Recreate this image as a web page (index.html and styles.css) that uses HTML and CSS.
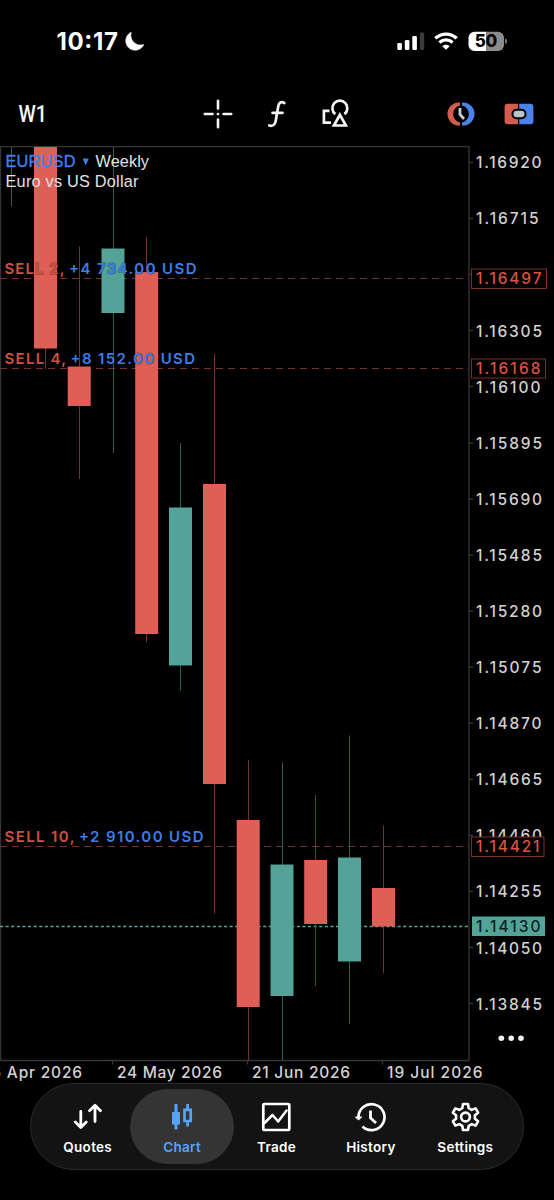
FILE: index.html
```html
<!DOCTYPE html>
<html lang="en">
<head>
<meta charset="utf-8">
<title>EURUSD Chart</title>
<link rel="stylesheet" href="styles.css">
</head>
<body>
<div class="app">
  <header class="status">
    <svg class="clock" viewBox="0 0 92 30">
      <text x="0.500" y="23.300" textLength="61.500">10:17</text>
      <path d="M75.200 5.300A9.400 9.400 0 1 0 87.800 17.500C80.500 20 73 13.500 75.200 5.300Z" fill="#fff" stroke="#fff" stroke-width=".6"/>
    </svg>
    <div class="indicators">
      <svg width="28" height="19" viewBox="0 0 28 19">
        <rect x="0.300" y="11" width="4.600" height="7" rx="1.300" fill="#fff"/>
        <rect x="7.800" y="8" width="4.600" height="10" rx="1.300" fill="#fff"/>
        <rect x="15.300" y="4" width="4.600" height="14" rx="1.300" fill="#fff"/>
        <rect x="22.900" y="0.500" width="4.300" height="17.500" rx="1.300" fill="#3b3b3b"/>
      </svg>
      <svg width="24" height="19" viewBox="0 0 24 19">
        <path d="M1.300 6.300C7.300.600 16.700.600 22.700 6.300" fill="none" stroke="#fff" stroke-width="3.300"/>
        <path d="M5.400 10.500C9.200 7.100 14.800 7.100 18.600 10.500" fill="none" stroke="#fff" stroke-width="3.200"/>
        <path d="M12 17.800L8.300 14.200C10.300 12.200 13.700 12.200 15.700 14.200Z" fill="#fff"/>
      </svg>
      <svg class="battery" width="39" height="21" viewBox="0 0 39 21">
        <path d="M6.500.700H18.300V20H6.500A6 6 0 0 1 .500 14V6.700A6 6 0 0 1 6.500.700Z" fill="#fff"/>
        <path d="M18.300.700H30A6 6 0 0 1 36 6.700V14A6 6 0 0 1 30 20H18.300Z" fill="#8b8b8b"/>
        <path d="M37.200 7.600Q39 8.400 39 10.300T37.200 13Z" fill="#8b8b8b"/>
        <text x="6.800" y="16.400" textLength="22.500">50</text>
      </svg>
    </div>
  </header>

  <nav class="toolbar">
    <svg class="timeframe" viewBox="0 0 32 30"><text x="0.500" y="22.500" textLength="28.500" lengthAdjust="spacingAndGlyphs">W1</text></svg>
    <div class="tools">
      <svg width="30" height="30" viewBox="0 0 30 30" stroke="#f4f4f4" stroke-width="2.600" stroke-linecap="round">
        <path d="M15 1.800V9.500M15 20.500V28.200M1.800 15H9.500M20.500 15H28.200M14.900 15H15.100"/>
      </svg>
      <svg width="20" height="28" viewBox="0 0 20 28" fill="none" stroke="#f4f4f4" stroke-width="2.700" stroke-linecap="round">
        <path d="M17.300 3C14.300 1.300 11.900 2.500 11.300 6L8.700 21C8.100 24.700 5.600 26.500 2.300 25.500M5.500 12.800H15.500"/>
      </svg>
      <svg width="30" height="30" viewBox="0 0 30 30" fill="none" stroke="#f4f4f4" stroke-width="2.700">
        <path d="M8.500 11.800H2.900V23.700H10"/>
        <path d="M14.300 15.100A7.500 7.500 0 1 1 23.400 15.100"/>
        <path d="M18.900 15.800L24.900 26.500H12.900Z"/>
      </svg>
    </div>
    <div class="trade-tools">
      <svg width="28" height="24" viewBox="0 0 28 24">
        <path d="M13 0.500H12A11.500 11.500 0 0 0 12 23.500H13V20.500A8.700 8.700 0 0 1 13 3.500Z" fill="#d25d4c"/>
        <path d="M15 .500H16A11.500 11.500 0 0 1 16 23.500H15V20.500A8.700 8.700 0 0 0 15 3.500Z" fill="#4b83ee"/>
        <path d="M13 6V12.500L17 17" fill="none" stroke="#c6cdd2" stroke-width="2.800"/>
      </svg>
      <svg width="30" height="22" viewBox="0 0 30 22">
        <path d="M3.500.800H14V21.200H3.500Q.600 21.200.600 18.300V3.700Q.600.800 3.500.800Z" fill="#d25d4c"/>
        <path d="M15.200.800H26.500Q29.400.800 29.400 3.700V18.300Q29.400 21.200 26.500 21.200H15.200Z" fill="#4b83ee"/>
        <rect x="8.500" y="6.800" width="13" height="8.400" rx="4" fill="#b9c3cb" stroke="#000" stroke-width="2"/>
      </svg>
    </div>
  </nav>

  <main>
    <svg class="chart" viewBox="0 146 554 937">
      <g class="frame">
        <path d="M0.500 1060V146.500H469V1060M0 1060.500H469.500"/>
        <path d="M469 162.500h4M469 218.500h4M469 274.500h4M469 330.500h4M469 386.500h4M469 443h4M469 499h4M469 555h4M469 611h4M469 667h4M469 723h4M469 779.500h4M469 835.500h4M469 891.500h4M469 947.500h4M469 1003.500h4M112.500 1060v4.500M247.500 1060v4.500M382.500 1060v4.500"/>
      </g>
      <g class="order-line">
        <path d="M0 278.500H469M0 368.500H469M0 846.500H469"/>
      </g>
      <path class="price-line" d="M0 926.500H469"/>
      <g class="wick down">
        <path d="M45.500 147V369M79.500 246.500V479M146.500 237.500V642M214.500 354V913.500M248.500 760V1060M315.500 795V986M383.500 825.500V973.500"/>
      </g>
      <g class="wick up">
        <path d="M11.500 147V206.500M113.500 147V453M180.500 443V690.500M282.500 762.500V1060M349.500 735.500V1024"/>
      </g>
      <g class="body down">
        <rect x="34" y="147" width="23" height="201.500"/>
        <rect x="67.700" y="366.500" width="23" height="39.500"/>
        <rect x="135.200" y="272" width="23" height="362"/>
        <rect x="203" y="484" width="23" height="300"/>
        <rect x="236.700" y="820" width="23" height="187"/>
        <rect x="304.200" y="860" width="23" height="64"/>
        <rect x="372" y="888" width="23" height="38.500"/>
      </g>
      <g class="body up">
        <rect x="101.500" y="248.500" width="23" height="64.500"/>
        <rect x="169" y="507.500" width="23" height="158"/>
        <rect x="270.500" y="864.500" width="23" height="131.500"/>
        <rect x="338" y="857.500" width="23" height="104"/>
      </g>

      <g class="symbol">
        <text class="ticker" x="5.500" y="166.500" textLength="70">EURUSD</text>
        <path d="M82.700 158.500H88.700L85.700 165.500Z" fill="#3f82ee"/>
        <text x="95.500" y="166.500" textLength="53.500">Weekly</text>
        <text x="5.500" y="187" textLength="133">Euro vs US Dollar</text>
      </g>
      <g class="order">
        <text class="sell" x="4.500" y="274" textLength="60">SELL 2,</text>
        <text class="profit" x="69" y="274" textLength="127.500">+4 734.00 USD</text>
        <text class="sell" x="4.500" y="364" textLength="61.500">SELL 4,</text>
        <text class="profit" x="70.500" y="364" textLength="124.500">+8 152.00 USD</text>
        <text class="sell" x="4.500" y="842" textLength="70">SELL 10,</text>
        <text class="profit" x="79" y="842" textLength="124.500">+2 910.00 USD</text>
      </g>

      <g class="axis">
        <text x="476" y="168" textLength="65.500">1.16920</text>
        <text x="476" y="224" textLength="62.500">1.16715</text>
        <text x="476" y="336.500" textLength="66">1.16305</text>
        <text x="476" y="392.500" textLength="64.500">1.16100</text>
        <text x="476" y="448.700" textLength="66">1.15895</text>
        <text x="476" y="504.700" textLength="66">1.15690</text>
        <text x="476" y="560.700" textLength="66">1.15485</text>
        <text x="476" y="616.700" textLength="66">1.15280</text>
        <text x="476" y="672.700" textLength="65.500">1.15075</text>
        <text x="476" y="729" textLength="65.500">1.14870</text>
        <text x="476" y="785" textLength="66">1.14665</text>
        <text x="476" y="841.300" textLength="66">1.14460</text>
        <text x="476" y="897.300" textLength="65.500">1.14255</text>
        <text x="476" y="953.500" textLength="66">1.14050</text>
        <text x="476" y="1009.500" textLength="66">1.13845</text>
        <text x="-19" y="1077.500" textLength="101">26 Apr 2026</text>
        <text x="117" y="1077.500" textLength="105">24 May 2026</text>
        <text x="252" y="1077.500" textLength="98">21 Jun 2026</text>
        <text x="387" y="1077.500" textLength="95.500">19 Jul 2026</text>
      </g>
      <g class="order-tag">
        <rect x="471.500" y="269" width="75" height="19.500"/>
        <text x="476" y="284" textLength="65.500">1.16497</text>
        <rect x="471.500" y="359" width="74" height="19"/>
        <text x="476" y="374" textLength="64.500">1.16168</text>
        <rect x="471.500" y="837" width="72.500" height="19.500"/>
        <text x="476" y="852.300" textLength="63.500">1.14421</text>
      </g>
      <g class="price-tag">
        <rect x="472" y="916.500" width="73" height="19.500"/>
        <text x="476" y="931.700" textLength="64.500">1.14130</text>
      </g>
      <g fill="#f2f2f2"><circle cx="501.300" cy="1038.200" r="2.800"/><circle cx="511.200" cy="1038.200" r="2.800"/><circle cx="521" cy="1038.200" r="2.800"/></g>
    </svg>
  </main>

  <nav class="tabs">
    <a class="tab">
      <svg width="32" height="32" viewBox="0 0 32 32" fill="none" stroke="#fff" stroke-width="2.800" stroke-linecap="round" stroke-linejoin="round">
        <path d="M8.800 10.500V26M3.300 21L8.800 26.500L14.300 21M23 20.500V4.800M17.500 9.800L23 4.300L28.500 9.800"/>
      </svg>
      <span>Quotes</span>
    </a>
    <a class="tab active">
      <svg width="32" height="32" viewBox="0 0 32 32">
        <path d="M8.500 3H11.500V11H14V23.500H11.500V28.500H8.500V23.500H6V11H8.500Z" fill="#52a5fb"/>
        <path d="M21.600 3V7.500M21.600 20.500V25.500M18.500 8.800H24.700V20H18.500Z" fill="none" stroke="#52a5fb" stroke-width="2.700"/>
      </svg>
      <span>Chart</span>
    </a>
    <a class="tab">
      <svg width="32" height="32" viewBox="0 0 32 32" fill="none" stroke="#fff" stroke-width="2.700" stroke-linejoin="round">
        <rect x="3.300" y="3" width="26" height="26" rx="1"/>
        <path d="M4.500 22L12.500 14L18.200 20.500L26.500 9.500" stroke-linecap="round" stroke-width="2.500"/>
      </svg>
      <span>Trade</span>
    </a>
    <a class="tab">
      <svg width="32" height="32" viewBox="0 0 32 32" fill="none" stroke="#fff" stroke-width="2.700">
        <path d="M3.500 16.500A13 13 0 1 1 7.500 25.500"/>
        <path d="M0.500 16L3.500 19L6.700 16Z" fill="#fff" stroke-width="1" stroke-linejoin="round"/>
        <path d="M15.500 9.500V17L21 22" stroke-width="2.800"/>
      </svg>
      <span>History</span>
    </a>
    <a class="tab">
      <svg width="32" height="32" viewBox="0 0 32 32" fill="none" stroke="#fff" stroke-width="2.600" stroke-linejoin="round">
        <path d="M14 3H19L19.700 7.200L22.700 8.900L26.600 7.400L29.100 11.700L25.900 14.300V17.700L29.100 20.300L26.600 24.600L22.700 23.100L19.700 24.800L19 29H14L13.300 24.800L10.300 23.100L6.400 24.600L3.900 20.300L7.100 17.700V14.300L3.900 11.700L6.400 7.400L10.300 8.900L13.300 7.200Z"/>
        <circle cx="16.500" cy="16" r="4.400"/>
      </svg>
      <span>Settings</span>
    </a>
  </nav>
</div>
</body>
</html>
```
FILE: styles.css
```css
* { box-sizing: border-box; }
body { margin: 0; background: #000; color: #fff; font-family: Inter, "Liberation Sans", sans-serif; }
.app { width: 554px; height: 1200px; display: flex; flex-direction: column; overflow: hidden; background: #000; }
svg { display: block; flex: none; }
.status { height: 82px; padding: 27px 47px 0 56px; display: flex; justify-content: space-between; align-items: flex-start; }
.clock { width: 92px; height: 30px; font-size: 24px; font-weight: 700; fill: #fff; }
.indicators { display: flex; gap: 9px; padding-top: 4px; align-items: center; }
.battery { margin-left: 1px; font-size: 17px; font-weight: 800; fill: #050505; }
.toolbar { height: 64px; padding: 0 20.500px 0 18px; display: flex; align-items: center; }
.timeframe { width: 32px; height: 30px; margin-right: 153px; overflow: visible; font-family: Roboto, sans-serif; font-size: 23.500px; font-weight: 500; fill: #f8f8f8; }
.tools { display: flex; align-items: center; gap: 34px; }
.trade-tools { display: flex; align-items: center; gap: 29px; margin-left: auto; }
.chart { width: 554px; height: 937px; }
.frame { fill: none; stroke: #363638; stroke-width: 1.300; }
.order-line { stroke: #74342c; stroke-width: 1; stroke-dasharray: 7 5; }
.price-line { stroke: #57a49a; stroke-width: 1.300; stroke-dasharray: 3.100 2.500; }
.wick { stroke-width: 1; fill: none; }
.wick.down { stroke: #74332f; }
.wick.up { stroke: #2d5f59; }
.body.down { fill: #df5f57; }
.body.up { fill: #53a398; }
.symbol { font-family: "Liberation Sans", Arial, sans-serif; font-size: 16.300px; fill: #e2e2e2; }
.symbol .ticker { fill: #3f82ee; stroke: #3f82ee; stroke-width: .3px; }
.order { font-size: 15px; font-weight: 600; stroke: rgba(0, 0, 0, .45); stroke-width: 1px; paint-order: stroke; }
.sell { fill: #cf5140; }
.profit { fill: #3c7ee9; }
.axis { font-size: 15.500px; font-weight: 550; fill: #d2d2d2; }
.order-tag { font-size: 15.500px; font-weight: 550; fill: #dc5242; }
.order-tag rect { fill: #000; stroke: #7d2e27; stroke-width: 1; }
.price-tag { font-size: 15.500px; font-weight: 550; fill: #0a2320; }
.price-tag rect { fill: #53a398; }
.tabs { width: 494px; height: 87px; flex: none; margin-left: 29.500px; padding: 5px 10px 5px 10px; display: grid; grid-template-columns: repeat(5, 1fr); background: #131313; border: 1px solid #2b2b2b; border-radius: 44px; }
.tab { display: flex; flex-direction: column; align-items: center; padding-top: 12px; gap: 4.500px; font-size: 13.500px; font-weight: 600; line-height: 18px; letter-spacing: .3px; }
.tab.active { margin: 0 -5px; background: #343434; border-radius: 38px; color: #52a5fb; }
```
